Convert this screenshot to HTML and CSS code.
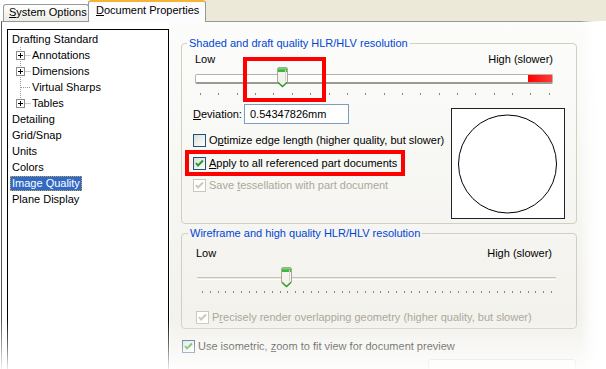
FILE: index.html
```html
<!DOCTYPE html>
<html>
<head>
<meta charset="utf-8">
<title>Document Properties - Image Quality</title>
<link rel="stylesheet" href="styles.css">
</head>
<body>
<div class="win">
  <div class="tabs">
    <div class="tab"><u>S</u>ystem Options</div>
    <div class="tab active"><u>D</u>ocument Properties</div>
    <div class="tabfill"></div>
  </div>
  <div class="page">
    <div class="left">
      <ul class="tree">
        <li class="node">Drafting Standard</li>
        <li class="child"><svg class="conn" width="20" height="16" viewBox="0 0 20 16"><path d="M8.5 0V16M12.5 8.5H19" stroke="#9a9a9a" stroke-dasharray="1 1" fill="none"/><rect x="4.5" y="4.5" width="8" height="8" fill="#fff" stroke="#8c8c8c"/><path d="M6 8.5H11M8.5 6V11" stroke="#000"/></svg>Annotations</li>
        <li class="child"><svg class="conn" width="20" height="16" viewBox="0 0 20 16"><path d="M8.5 0V16M12.5 8.5H19" stroke="#9a9a9a" stroke-dasharray="1 1" fill="none"/><rect x="4.5" y="4.5" width="8" height="8" fill="#fff" stroke="#8c8c8c"/><path d="M6 8.5H11M8.5 6V11" stroke="#000"/></svg>Dimensions</li>
        <li class="child"><svg class="conn" width="20" height="16" viewBox="0 0 20 16"><path d="M8.5 0V16M9 8.5H19" stroke="#9a9a9a" stroke-dasharray="1 1" fill="none"/></svg>Virtual Sharps</li>
        <li class="child"><svg class="conn" width="20" height="16" viewBox="0 0 20 16"><path d="M8.5 0V8M12.5 8.5H19" stroke="#9a9a9a" stroke-dasharray="1 1" fill="none"/><rect x="4.5" y="4.5" width="8" height="8" fill="#fff" stroke="#8c8c8c"/><path d="M6 8.5H11M8.5 6V11" stroke="#000"/></svg>Tables</li>
        <li class="node">Detailing</li>
        <li class="node">Grid/Snap</li>
        <li class="node">Units</li>
        <li class="node">Colors</li>
        <li class="node"><span class="sel">Image Quality</span></li>
        <li class="node">Plane Display</li>
      </ul>
    </div>
    <div class="pane">
      <fieldset class="group g1">
        <legend>Shaded and draft quality HLR/HLV resolution</legend>
        <div class="scale s1lab"><span>Low</span><span>High (slower)</span></div>
        <div class="slider s1">
          <div class="track"><div class="hot"></div></div>
          <div class="ticks"><i></i><i></i><i></i><i></i><i></i><i></i><i></i><i></i><i></i><i></i><i></i><i></i><i></i><i></i><i></i><i></i><i></i><i></i><i></i><i></i></div>
          <svg class="thumb t1" width="11" height="21" viewBox="0 0 11 21"><path d="M0.5 2Q0.5 0.5 2 0.5H9Q10.5 0.5 10.5 2V15L5.5 20L0.5 15Z" fill="#f4f3ee" stroke="#a8a79c"/><path d="M1 1.2H10V5H1Z" fill="#3cb83c"/><path d="M1 1.2H10V2.4H1Z" fill="#7ed87e"/><path d="M8.5 3V14.5" stroke="#d8d6cb"/><path d="M1 15.2L5.5 19.6L10 15.2" fill="none" stroke="#2ea02e" stroke-width="1.4"/></svg>
          <div class="mark m1"></div>
        </div>
        <div class="lower">
          <div class="opts">
            <div class="dev"><span class="devlab"><u>D</u>eviation:</span><div class="input">0.54347826mm</div></div>
            <div class="chk c1"><span class="box"></span><span>O<u>p</u>timize edge length (higher quality, but slower)</span></div>
            <div class="chk c2"><span class="box"><svg width="11" height="11" viewBox="0 0 11 11"><polyline points="2,5 4,7.5 9,2.5" fill="none" stroke="#21a121" stroke-width="2"/></svg></span><span><u>A</u>pply to all referenced part documents</span><div class="mark m2"></div></div>
            <div class="chk c3 off"><span class="box"><svg width="11" height="11" viewBox="0 0 11 11"><polyline points="2,5 4,7.5 9,2.5" fill="none" stroke="#cac8bb" stroke-width="2"/></svg></span><span>Save <u>t</u>essellation with part document</span></div>
          </div>
          <div class="preview"><svg width="112" height="109" viewBox="0 0 112 109"><circle cx="55.5" cy="55" r="49" fill="none" stroke="#000" stroke-width="1"/></svg></div>
        </div>
      </fieldset>
      <fieldset class="group g2">
        <legend>Wireframe and high quality HLR/HLV resolution</legend>
        <div class="scale s2lab"><span>Low</span><span>High (slower)</span></div>
        <div class="slider s2">
          <div class="groove"></div>
          <div class="ticks"><i></i><i></i><i></i><i></i><i></i><i></i><i></i><i></i><i></i><i></i><i></i><i></i><i></i><i></i><i></i><i></i><i></i><i></i><i></i><i></i><i></i><i></i><i></i><i></i><i></i><i></i><i></i><i></i><i></i><i></i><i></i><i></i><i></i><i></i><i></i><i></i><i></i><i></i><i></i><i></i><i></i><i></i><i></i><i></i><i></i><i></i></div>
          <svg class="thumb t2" width="11" height="21" viewBox="0 0 11 21"><path d="M0.5 2Q0.5 0.5 2 0.5H9Q10.5 0.5 10.5 2V15L5.5 20L0.5 15Z" fill="#f4f3ee" stroke="#a8a79c"/><path d="M1 1.2H10V5H1Z" fill="#3cb83c"/><path d="M1 1.2H10V2.4H1Z" fill="#7ed87e"/><path d="M8.5 3V14.5" stroke="#d8d6cb"/><path d="M1 15.2L5.5 19.6L10 15.2" fill="none" stroke="#2ea02e" stroke-width="1.4"/></svg>
        </div>
        <div class="chk c4 off"><span class="box"><svg width="11" height="11" viewBox="0 0 11 11"><polyline points="2,5 4,7.5 9,2.5" fill="none" stroke="#cac8bb" stroke-width="2"/></svg></span><span>P<u>r</u>ecisely render overlapping geometry (higher quality, but slower)</span></div>
      </fieldset>
      <div class="chk c5"><span class="box"><svg width="11" height="11" viewBox="0 0 11 11"><polyline points="2,5 4,7.5 9,2.5" fill="none" stroke="#21a121" stroke-width="2"/></svg></span><span>Use isometric, <u>z</u>oom to fit view for document preview</span></div>
      <div class="btn"></div>
    </div>
  </div>
  <div class="fade"></div>
</div>
</body>
</html>
```
FILE: styles.css
```css
* { box-sizing: border-box; margin: 0; padding: 0; }
body {
  margin: 0;
  font: 11px/13px "Liberation Sans", Arial, sans-serif;
  color: #000;
  background: #fff;
}
u { text-decoration: underline; text-underline-offset: 1px; }

.win {
  position: relative;
  width: 606px;
  height: 369px;
  overflow: hidden;
  background: #fff;
}

/* tabs */
.tabs {
  display: flex;
  align-items: flex-end;
  height: 21px;
  padding-left: 3px;
  position: relative;
  z-index: 1;
}
.tab {
  width: 86px;
  height: 17px;
  padding-left: 5px;
  border: 1px solid #919b9c;
  border-bottom: none;
  border-radius: 3px 3px 0 0;
  background: linear-gradient(#ffffff, #ecebe5);
  line-height: 15px;
  white-space: nowrap;
}
.tab.active {
  width: 118px;
  height: 22px;
  margin-left: -1px;
  margin-bottom: -1px;
  padding-left: 7px;
  border-top: 2px solid #f5b435;
  background: #fcfcfe;
  line-height: 17px;
}
.tabfill {
  flex: 1;
  height: 21px;
  background: #ece9d8;
}

/* page */
.page {
  display: flex;
  height: 348px;
  margin-left: 1px;
  border-left: 1px solid #555;
  border-top: 1px solid #919b9c;
}
.left {
  width: 168px;
  padding: 7px 0 0 5px;
  background: #fff;
}
.tree {
  list-style: none;
  width: 162px;
  height: 400px;
  border: 1px solid #000;
  background: #fff;
  padding: 1px 0 0 4px;
}
.tree li {
  height: 16px;
  line-height: 16px;
  white-space: nowrap;
  display: flex;
  align-items: center;
}
.conn { display: block; flex: none; }
.sel {
  margin-left: -2px;
  padding: 0 1px;
  line-height: 13px;
  background: #316ac5;
  color: #fff;
  border: 1px dotted #c9a24a;
}

/* right pane */
.pane {
  flex: 1;
  padding: 15px 0 0 11px;
  background: linear-gradient(#fcfcfb, #f1f0ea);
}
.group {
  width: 396px;
  border: 1px solid #d0d0bf;
  border-radius: 4px;
  padding: 0 11px 4px 11px;
}
.group legend {
  color: #0046d5;
  line-height: 13px;
  padding: 0 2px;
}
.g1 legend { margin-left: -6px; }

.scale {
  display: flex;
  justify-content: space-between;
  height: 13px;
}
.s1lab { margin: 3px 12px 0 2px; }

.slider { position: relative; }
.s1 { height: 34px; padding-top: 8px; margin: 0 12px 0 2px; }
.s1 .track {
  height: 10px;
  border: 1px solid #b5b3a6;
  border-bottom: 2px solid #9c9a8f;
  border-radius: 2px;
  background: #fff;
  display: flex;
  justify-content: flex-end;
}
.s1 .hot {
  width: 24px;
  background: linear-gradient(90deg, #ff0000, #ff3a3a);
}
.ticks {
  display: flex;
  justify-content: space-between;
}
.ticks i {
  display: block;
  width: 1px;
  height: 2px;
  background: #8a887e;
}
.s1 .ticks { margin: 9px 3px 0 5px; }
.thumb { position: absolute; display: block; }
.t1 { left: 82px; top: 1px; }
.mark {
  position: absolute;
  border: 4px solid #ff0000;
}
.m1 { left: 48px; top: -9px; width: 83px; height: 45px; }

.lower {
  display: flex;
  justify-content: space-between;
}
.opts { padding-top: 4px; }
.dev {
  display: flex;
  align-items: center;
  height: 20px;
}
.devlab { width: 51px; }
.input {
  width: 105px;
  height: 20px;
  border: 1px solid #7f9db9;
  background: #fff;
  padding-left: 5px;
  line-height: 18px;
}
.chk {
  display: flex;
  align-items: center;
  gap: 3px;
  height: 13px;
  white-space: nowrap;
  position: relative;
}
.box {
  width: 13px;
  height: 13px;
  flex: none;
  border: 1px solid #1c5180;
  background: linear-gradient(135deg, #dcdcd7, #ffffff);
  display: flex;
}
.chk.off { color: #aca899; }
.chk.off .box { border-color: #cac8bb; background: #fff; }
.c1 { margin-top: 10px; }
.c2 { margin-top: 10px; }
.c3 { margin-top: 9px; }
.m2 { left: -8px; top: -7px; width: 220px; height: 26px; }

.preview {
  margin-top: 8px;
  width: 114px;
  height: 111px;
  border: 1px solid #222;
  background: #fff;
}
.preview svg { display: block; }

.g2 { margin-top: 3px; padding: 0 11px 4px 14px; }
.g2 legend { margin-left: -8px; }
.s2lab { margin: 7px 13px 0 0; }
.s2 { height: 36px; padding-top: 17px; margin: 0 9px 0 1px; }
.s2 .groove {
  height: 3px;
  border-top: 1px solid #c8c6ba;
  border-bottom: 1px solid #fff;
  background: #e9e8e1;
  border-radius: 1px;
}
.s2 .ticks { margin: 11px 4px 0 5px; }
.t2 { left: 84px; top: 7px; }
.c4 { margin-top: 15px; }

.c5 { margin: 11px 0 0 1px; }
.btn {
  margin: 6px 0 0 247px;
  width: 148px;
  height: 30px;
  border: 1px solid #c4c2b6;
  border-radius: 3px;
  background: #fbfbf9;
}

/* photographic fade at the edges */
.fade {
  position: absolute;
  inset: 0;
  pointer-events: none;
  background:
    linear-gradient(90deg, rgba(255,255,255,0) 580px, rgba(255,255,255,0.85) 592px, #fff 600px),
    linear-gradient(180deg, rgba(255,255,255,0) 318px, rgba(255,255,255,0.45) 346px, rgba(255,255,255,0.92) 369px);
}
```
